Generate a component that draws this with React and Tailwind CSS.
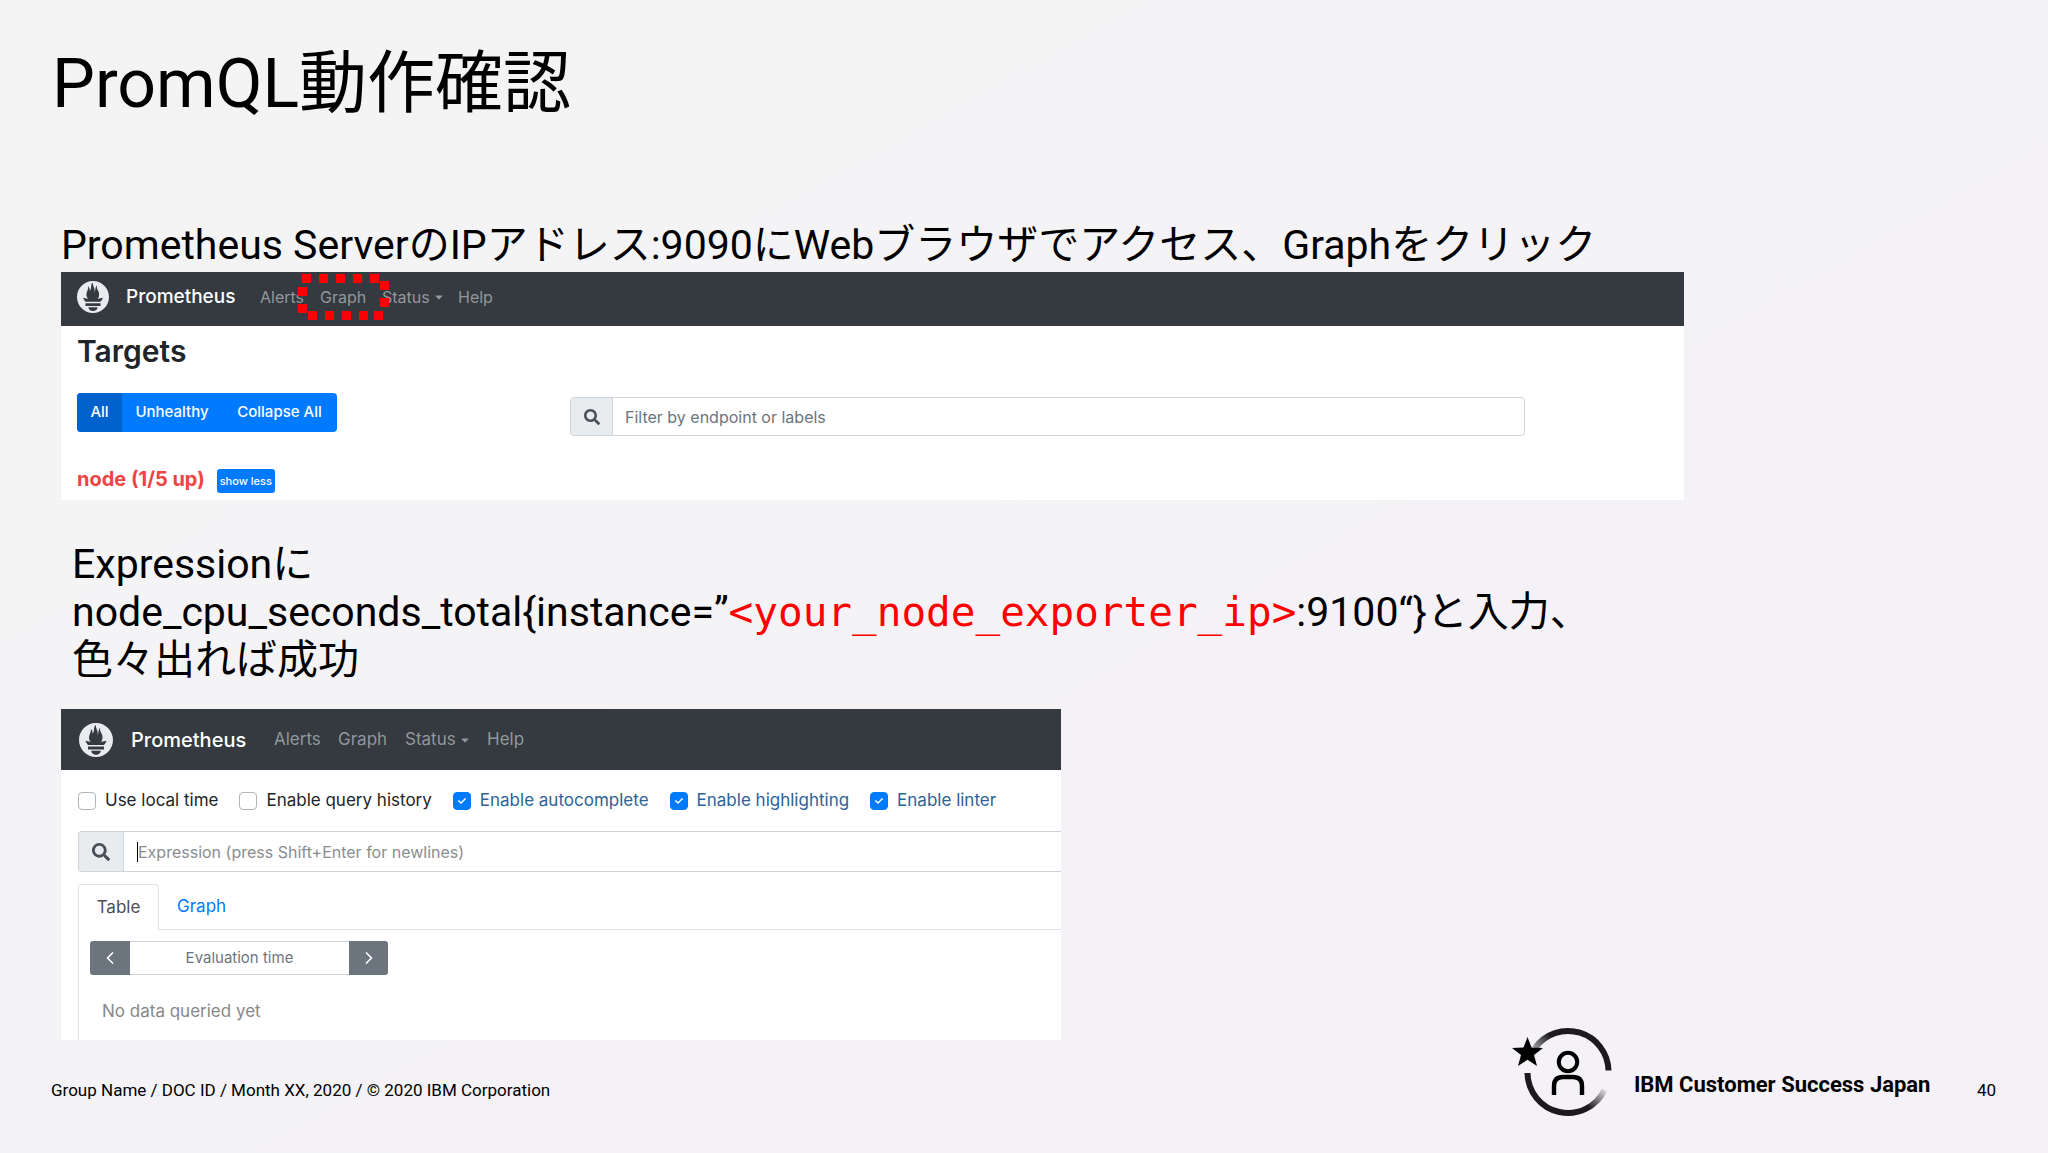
import { ChevronLeft, ChevronRight } from 'lucide-react';
import { FaCaretDown, FaCheck, FaSearch } from 'react-icons/fa';
import { SiPrometheus } from 'react-icons/si';

const options = [
  { id: 'local-time', label: 'Use local time', checked: false },
  { id: 'query-history', label: 'Enable query history', checked: false },
  { id: 'autocomplete', label: 'Enable autocomplete', checked: true },
  { id: 'highlighting', label: 'Enable highlighting', checked: true },
  { id: 'linter', label: 'Enable linter', checked: true },
];

// centres of the red squares that form the dotted frame
const dots = [
  [8, 5], [25, 5], [42, 5], [59, 5], [76, 5],
  [86, 12], [86, 29],
  [80, 42], [65, 42], [48, 42], [31, 42], [14, 42],
  [4, 35], [4, 18],
];

function DottedFrame() {
  return (
    <svg className="absolute -left-[22px] -top-[12px] w-[92px] h-[48px]" viewBox="0 0 92 48" fill="#ff0000">
      {dots.map(([x, y]) => (
        <rect key={`${x}-${y}`} x={x - 4} y={y - 4} width="9" height="9" />
      ))}
    </svg>
  );
}

function TargetsPanel() {
  return (
    <section className="bg-white h-[228px] text-[16px] overflow-hidden">
      <nav className="bg-[#343a40] h-[54px] flex items-center pl-4 pb-1 text-[#93979b]">
        <SiPrometheus className="w-8 h-8 text-[#e9ecef]" />
        <a href="#" className="ml-[17px] w-[134px] text-[19px] font-medium text-white">Prometheus</a>
        <a href="#" className="w-[60px]">Alerts</a>
        <a href="#" className="relative w-[62px]">
          Graph
          <DottedFrame />
        </a>
        <a href="#" className="w-[76px] flex items-center gap-[3px]">
          Status <FaCaretDown className="w-3 h-3" />
        </a>
        <a href="#">Help</a>
      </nav>

      <div className="px-4">
        <h2 className="text-[30px] leading-[50px] font-semibold text-[#212529]">Targets</h2>

        <div className="flex mt-[17px]">
          <div className="w-[493px] flex items-start">
            <div className="flex h-[39px] rounded-[4px] overflow-hidden bg-[#007bff] text-white font-medium text-[15px]">
              <button className="bg-[#0062cc] w-[45px]">All</button>
              <button className="w-[100px]">Unhealthy</button>
              <button className="w-[115px]">Collapse All</button>
            </div>
          </div>
          <div className="flex-1 mr-[143px] mt-1 h-[39px] flex border border-[#ced4da] rounded-[4px] overflow-hidden">
            <label htmlFor="endpoint-filter" className="w-[42px] bg-[#e9ecef] border-r border-[#ced4da] flex items-center justify-center text-[#495057]">
              <FaSearch className="w-4 h-4" />
            </label>
            <input
              id="endpoint-filter"
              type="text"
              placeholder="Filter by endpoint or labels"
              className="flex-1 px-3 outline-none placeholder:text-[#6c757d]"
            />
          </div>
        </div>

        <div className="flex items-center mt-[29px] gap-3">
          <h3 className="text-[20px] leading-6 font-bold text-[#ee4444]">node (1/5 up)</h3>
          <button className="bg-[#007bff] text-white text-[11px] font-medium w-[58px] h-6 mt-1 rounded-[3px]">show less</button>
        </div>
      </div>
    </section>
  );
}

function GraphPanel() {
  return (
    <section className="bg-white w-[1000px] max-w-full h-[331px] text-[17px] overflow-hidden">
      <nav className="bg-[#343a40] h-[61px] flex items-center pl-[18px] text-[#93979b]">
        <SiPrometheus className="w-[34px] h-[34px] text-[#e9ecef]" />
        <a href="#" className="ml-[18px] w-[143px] text-[20px] font-medium text-white">Prometheus</a>
        <a href="#" className="w-16">Alerts</a>
        <a href="#" className="w-[67px]">Graph</a>
        <a href="#" className="w-[82px] flex items-center gap-[3px]">
          Status <FaCaretDown className="w-3 h-3" />
        </a>
        <a href="#">Help</a>
      </nav>

      <div className="flex items-center h-[61px] pl-[17px] gap-[21px]">
        {options.map((o) => (
          <div key={o.id} className="flex items-center gap-[9px]">
            <span className="grid place-items-center">
              <input
                id={o.id}
                type="checkbox"
                defaultChecked={o.checked}
                className="col-start-1 row-start-1 appearance-none w-[18px] h-[18px] rounded-[4px] border border-[#adb5bd] bg-white checked:bg-[#007bff] checked:border-[#007bff]"
              />
              {o.checked && <FaCheck className="col-start-1 row-start-1 w-2 h-2 text-white pointer-events-none" />}
            </span>
            <label htmlFor={o.id} className={o.checked ? 'text-[#2f6296]' : 'text-[#212529]'}>
              {o.label}
            </label>
          </div>
        ))}
      </div>

      <div className="ml-[17px] h-[41px] flex border border-r-0 border-[#ced4da] rounded-l-[4px] overflow-hidden">
        <label htmlFor="expression" className="w-[45px] bg-[#e9ecef] border-r border-[#ced4da] flex items-center justify-center text-[#495057]">
          <FaSearch className="w-[18px] h-[18px]" />
        </label>
        <div className="flex-1 flex items-center pl-[13px]">
          <span className="w-px h-5 bg-black"></span>
          <input
            id="expression"
            type="text"
            placeholder="Expression (press Shift+Enter for newlines)"
            className="flex-1 text-[16px] outline-none placeholder:text-[#8a8d90]"
          />
        </div>
      </div>

      <div className="ml-[17px] mt-3 flex h-[46px]">
        <button className="w-[81px] border border-b-0 border-[#dee2e6] rounded-t-[4px] text-[#495057]">Table</button>
        <div className="flex-1 border-b border-[#dee2e6] flex">
          <button className="px-[18px] text-[#007bff]">Graph</button>
        </div>
      </div>

      <div className="ml-[17px] pl-[11px] pt-[11px] h-[120px] border-l border-[#dee2e6]">
        <div className="flex h-[34px] w-[298px] rounded-[3px] overflow-hidden text-white">
          <button aria-label="Earlier" className="w-[40px] bg-[#6c757d] flex items-center justify-center">
            <ChevronLeft className="w-5 h-5" />
          </button>
          <input
            type="text"
            aria-label="Evaluation time"
            placeholder="Evaluation time"
            className="flex-1 min-w-0 border-y border-[#ced4da] text-center text-[15px] outline-none placeholder:text-[#6c757d]"
          />
          <button aria-label="Later" className="w-[39px] bg-[#6c757d] flex items-center justify-center">
            <ChevronRight className="w-5 h-5" />
          </button>
        </div>
        <p className="mt-6 ml-3 text-[#888888]">No data queried yet</p>
      </div>
    </section>
  );
}

function CustomerSuccessLogo() {
  return (
    <svg className="w-[100px] h-[92px]" viewBox="0 0 100 92" fill="none">
      <defs>
        <linearGradient id="fade-top" gradientUnits="userSpaceOnUse" x1="20" y1="24" x2="38" y2="8">
          <stop offset="0" stopColor="#b5b5b8" />
          <stop offset="1" stopColor="#1c1a1c" />
        </linearGradient>
        <linearGradient id="fade-bottom" gradientUnits="userSpaceOnUse" x1="94" y1="60" x2="76" y2="80">
          <stop offset="0" stopColor="#f4f2f6" />
          <stop offset="1" stopColor="#1c1a1c" />
        </linearGradient>
      </defs>
      <path d="M23 21 A40.5 40.5 0 0 1 96.500 43.500" stroke="url(#fade-top)" strokeWidth="6" />
      <path d="M15.500 46 A40.500 40.500 0 0 0 92.500 63" stroke="url(#fade-bottom)" strokeWidth="6" />
      <path d="M15.500 10 L19.500 20.500 L31 21 L22 28 L25 39 L15.500 32.800 L6 39 L9 28 L0 21 L11.500 20.500 Z" fill="#000" />
      <circle cx="56" cy="35" r="9.200" stroke="#000" strokeWidth="4" />
      <path d="M42 68 V59 Q42 50 51 50 H61 Q70 50 70 59 V68" stroke="#000" strokeWidth="4.400" />
    </svg>
  );
}

export default function App() {
  return (
    <div className="min-h-screen flex flex-col bg-linear-to-br from-[#f4f4f4] to-[#f4f2f6] to-60% text-black font-['Roboto','Noto_Sans_CJK_JP',sans-serif]">
      <main className="pl-[61px] pr-[364px] pt-11">
        <h1 className="text-[68px] leading-[80px] -ml-[9px]">PromQL動作確認</h1>

        <p className="mt-[97px] mb-[3px] text-[41px] leading-[48px] whitespace-nowrap">
          Prometheus ServerのIPアドレス:9090にWebブラウザでアクセス、Graphをクリック
        </p>
        <div className="font-['Inter',sans-serif]">
          <TargetsPanel />
        </div>

        <p className="mt-10 mb-[25px] pl-[11px] text-[41px] leading-[48px]">
          Expressionに
          <br />
          node_cpu_seconds_total{'{'}instance=”
          <span className="font-['DejaVu_Sans_Mono',monospace] leading-none text-[#ff0000]">&lt;your_node_exporter_ip&gt;</span>
          :9100“{'}'}と入力、
          <br />
          色々出れば成功
        </p>
        <div className="font-['Inter',sans-serif]">
          <GraphPanel />
        </div>
      </main>

      <footer className="mt-auto h-[113px] pl-[51px] pr-[52px] pb-3 flex items-center text-[17px]">
        <span>Group Name / DOC ID / Month XX, 2020 / © 2020 IBM Corporation</span>
        <div className="ml-auto w-[465px] pb-9 flex items-center">
          <CustomerSuccessLogo />
          <strong className="ml-[22px] pt-6 text-[22px] font-bold">IBM Customer Success Japan</strong>
        </div>
        <span>40</span>
      </footer>
    </div>
  );
}
